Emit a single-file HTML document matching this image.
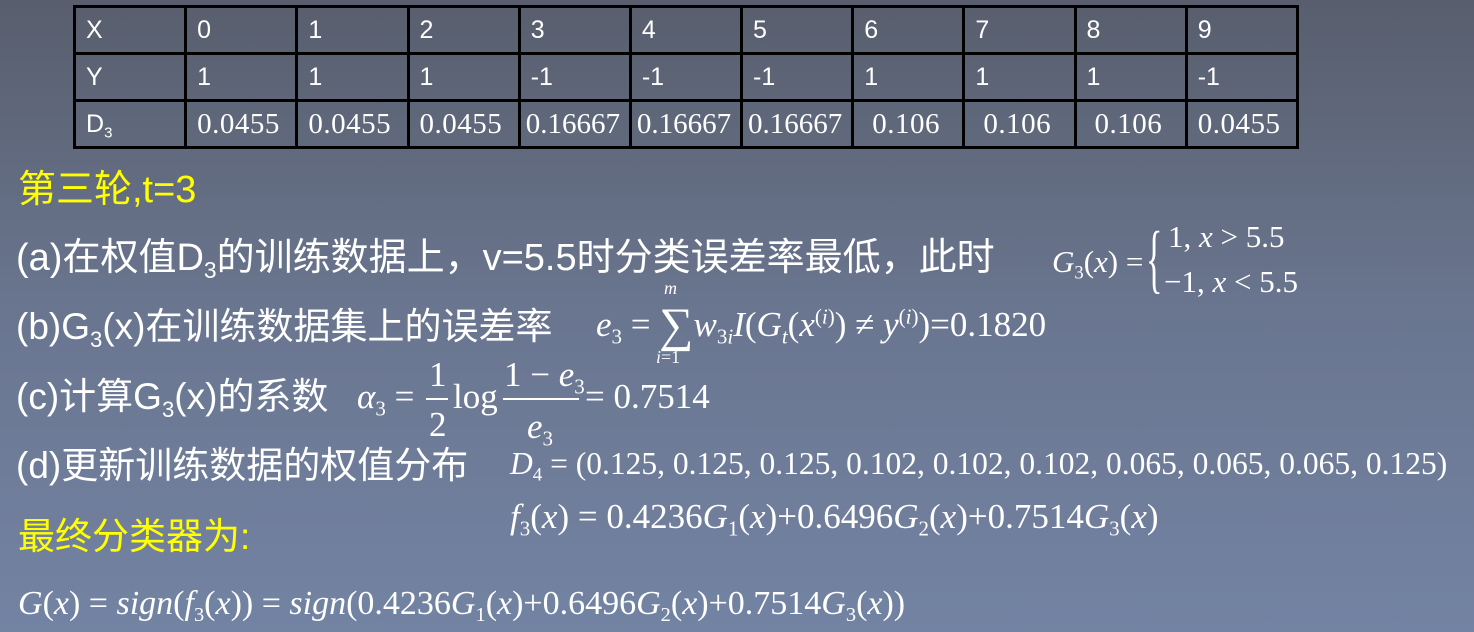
<!DOCTYPE html>
<html><head><meta charset="utf-8"><style>
html,body{margin:0;padding:0}
body{width:1474px;height:632px;overflow:hidden;position:relative;background:linear-gradient(#585e6d,#6a7690 50%,#7383a3);color:#fff;font-family:"Liberation Sans","Noto Sans CJK SC",sans-serif}
table{position:absolute;left:73px;top:5px;border-collapse:collapse;width:1226px;height:141px;table-layout:fixed}
td{border:3px solid #000;font-size:25px;padding:0 0 0 10px;height:44px;color:#fff;white-space:nowrap;overflow:hidden}
td.n{font-family:"Liberation Serif",serif;font-size:29px;letter-spacing:0.5px;padding-left:10px}
.a{position:absolute;white-space:nowrap;line-height:40px}
.cn{font-size:37px}
.y{color:#ffff00}
.m{font-family:"Liberation Serif",serif;font-size:35px}
i{font-style:italic}
sub{font-size:60%;vertical-align:-0.35em;line-height:0}
sup{font-size:60%;vertical-align:0.6em;line-height:0}
</style></head><body>
<table>
<tr><td>X</td><td>0</td><td>1</td><td>2</td><td>3</td><td>4</td><td>5</td><td>6</td><td>7</td><td>8</td><td>9</td></tr>
<tr><td>Y</td><td>1</td><td>1</td><td>1</td><td>-1</td><td>-1</td><td>-1</td><td>1</td><td>1</td><td>1</td><td>-1</td></tr>
<tr><td>D<sub>3</sub></td><td class="n">0.0455</td><td class="n">0.0455</td><td class="n">0.0455</td><td class="n" style="padding-left:5px;letter-spacing:0">0.16667</td><td class="n" style="padding-left:5px;letter-spacing:0">0.16667</td><td class="n" style="padding-left:5px;letter-spacing:0">0.16667</td><td class="n" style="padding-left:18px">0.106</td><td class="n" style="padding-left:18px">0.106</td><td class="n" style="padding-left:18px">0.106</td><td class="n">0.0455</td></tr>
</table>

<div class="a cn y" style="left:18px;top:170px;font-size:38px">第三轮,t=3</div>
<div class="a cn" style="left:16px;top:238px;font-size:38px">(a)在权值D<sub>3</sub>的训练数据上，v=5.5时分类误差率最低，此时</div>
<div class="a m" style="left:1052px;top:242px;font-size:31px"><i>G</i><sub>3</sub>(<i>x</i>) =</div>
<div class="a m" style="left:1146px;top:214px;font-size:76px;line-height:90px;transform:scaleX(0.45);transform-origin:left">{</div>
<div class="a m" style="left:1168px;top:217px;font-size:31px">1, <i>x</i> &gt; 5.5</div>
<div class="a m" style="left:1164px;top:262px;font-size:31px">−1, <i>x</i> &lt; 5.5</div>

<div class="a cn" style="left:16px;top:307px">(b)G<sub>3</sub>(x)在训练数据集上的误差率</div>
<div class="a m" style="left:596px;top:305px"><i>e</i><sub>3</sub> = <span style="font-size:48px;vertical-align:-5px">∑</span><i>w</i><sub>3<i>i</i></sub><i>I</i>(<i>G<sub>t</sub></i>(<i>x</i><sup>(<i>i</i>)</sup>) ≠ <i>y</i><sup>(<i>i</i>)</sup>)=0.1820</div>
<div class="a m" style="left:664px;top:278px;font-size:18px;line-height:20px"><i>m</i></div>
<div class="a m" style="left:656px;top:347px;font-size:18px;line-height:20px"><i>i</i>=1</div>

<div class="a cn" style="left:16px;top:377px">(c)计算G<sub>3</sub>(x)的系数</div>
<div class="a m" style="left:357px;top:377px"><i>α</i><sub>3</sub> =</div>
<div class="a m" style="left:429px;top:355px">1</div>
<div style="position:absolute;left:426px;top:398px;width:22px;height:2px;background:#fff"></div>
<div class="a m" style="left:429px;top:405px">2</div>
<div class="a m" style="left:453px;top:377px">log</div>
<div class="a m" style="left:504px;top:355px">1 − <i>e</i><sub>3</sub></div>
<div style="position:absolute;left:503px;top:398px;width:76px;height:2px;background:#fff"></div>
<div class="a m" style="left:527px;top:407px"><i>e</i><sub>3</sub></div>
<div class="a m" style="left:585px;top:377px">= 0.7514</div>

<div class="a cn" style="left:16px;top:446px">(d)更新训练数据的权值分布</div>
<div class="a m" style="left:510px;top:444px;font-size:31.5px"><i>D</i><sub>4</sub> = (0.125, 0.125, 0.125, 0.102, 0.102, 0.102, 0.065, 0.065, 0.065, 0.125)</div>
<div class="a m" style="left:510px;top:497px"><i>f</i><sub>3</sub>(<i>x</i>) = 0.4236<i>G</i><sub>1</sub>(<i>x</i>)+0.6496<i>G</i><sub>2</sub>(<i>x</i>)+0.7514<i>G</i><sub>3</sub>(<i>x</i>)</div>

<div class="a cn y" style="left:18px;top:517px">最终分类器为:</div>
<div class="a m" style="left:18px;top:584px;font-size:34px"><i>G</i>(<i>x</i>) = <i>sign</i>(<i>f</i><sub>3</sub>(<i>x</i>)) = <i>sign</i>(0.4236<i>G</i><sub>1</sub>(<i>x</i>)+0.6496<i>G</i><sub>2</sub>(<i>x</i>)+0.7514<i>G</i><sub>3</sub>(<i>x</i>))</div>
</body></html>
